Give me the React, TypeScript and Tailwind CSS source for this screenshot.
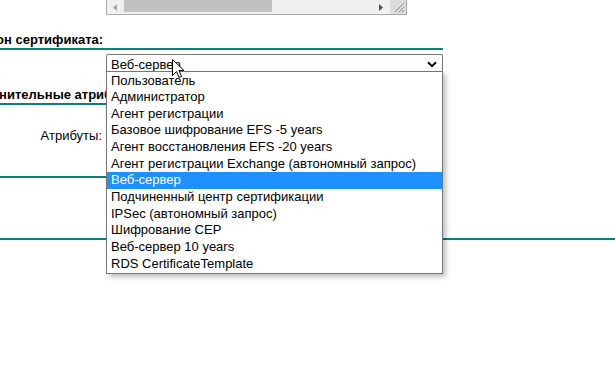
import type { JSX } from "react";

const TEAL = "border-[#0b7f7c]";

const OPTIONS = [
  "Пользователь",
  "Администратор",
  "Агент регистрации",
  "Базовое шифрование EFS -5 years",
  "Агент восстановления EFS -20 years",
  "Агент регистрации Exchange (автономный запрос)",
  "Веб-сервер",
  "Подчиненный центр сертификации",
  "IPSec (автономный запрос)",
  "Шифрование CEP",
  "Веб-сервер 10 years",
  "RDS CertificateTemplate",
];

const SELECTED = "Веб-сервер";

// bottom edge of the textarea above, only its horizontal scrollbar is in view
function TextareaStub(): JSX.Element {
  return (
    <div className="ml-[106px] flex h-[15px] w-[301px] border border-t-0 border-[#a9a9a9] bg-[#f0f0f0]">
      <div className="flex w-[17px] items-center justify-center">
        <svg width="5" height="7" viewBox="0 0 5 7">
          <path d="M4 0 L0 3.5 L4 7 Z" fill="#a3a3a3" />
        </svg>
      </div>
      <div className="mb-[2px] w-[148px] bg-[#c1c1c1]" />
      <div className="flex-1" />
      <div className="flex w-[17px] items-center justify-center">
        <svg width="5" height="7" viewBox="0 0 5 7">
          <path d="M0 0 L4 3.5 L0 7 Z" fill="#505050" />
        </svg>
      </div>
      <div className="relative w-[16px] bg-[#dcdcdc]">
        <svg width="16" height="14" viewBox="0 0 16 14" className="absolute inset-0">
          <path d="M14 3 L5 12 M14 7 L9 12 M14 10 L12 12" stroke="#8a8a8a" strokeWidth="1" />
        </svg>
      </div>
    </div>
  );
}

function Cursor(): JSX.Element {
  return (
    <svg width="13" height="20" viewBox="0 0 13 20" className="absolute left-[172px] top-[59px]">
      <path
        d="M0.5 0.5 L0.5 16.5 L4.5 12.5 L7 18.5 L9.5 17.5 L7 11.5 L12 11.5 Z"
        fill="#ffffff"
        stroke="#000000"
        strokeWidth="1"
        strokeLinejoin="miter"
      />
    </svg>
  );
}

export default function App(): JSX.Element {
  return (
    <div className="relative h-[384px] w-[615px] overflow-hidden bg-white font-['Liberation_Sans',Arial,sans-serif] text-[13px] text-black">
      <TextareaStub />

      <div className={`mt-[17px] w-[443px] border-b-2 ${TEAL} pb-[1px]`}>
        <div className="ml-[-40px] h-[15px] font-bold leading-[15px]">Шаблон сертификата:</div>
      </div>

      <div className="mt-[4px] pl-[106px]">
        <div className="flex h-[19px] w-[337px] items-center justify-between rounded-t-[2px] border border-b-0 border-[#767676] bg-white pl-[4px] pr-[5px]">
          <span className="leading-[17px]">{SELECTED}</span>
          <svg width="10" height="7" viewBox="0 0 10 7">
            <path d="M1 1.2 L5 5.2 L9 1.2" fill="none" stroke="#000" strokeWidth="2" />
          </svg>
        </div>
      </div>

      <div className={`mt-[14px] w-[443px] border-b-2 ${TEAL} pb-[1px]`}>
        <div className="ml-[-42px] h-[15px] font-bold leading-[15px]">Дополнительные атрибуты:</div>
      </div>

      <div className="mt-[22px] flex h-[17px] w-[104px] items-center justify-end pr-[2px]">
        <span>Атрибуты:</span>
      </div>

      <div className={`mt-[32px] w-[443px] border-b-2 ${TEAL}`} />
      <div className={`mt-[60px] w-full border-b-2 ${TEAL}`} />

      {/* open list of the select, drawn over the page */}
      <div className="absolute left-[106px] top-[71px] w-[337px] border border-[#767676] bg-white py-[0.5px] shadow-[3px_3px_5px_rgba(0,0,0,0.25)]">
        {OPTIONS.map((o) => (
          <div
            key={o}
            className={
              o === SELECTED
                ? "h-[16.67px] whitespace-nowrap bg-[#1e90ff] pl-[4px] leading-[16.67px] text-white"
                : "h-[16.67px] whitespace-nowrap pl-[4px] leading-[16.67px]"
            }
          >
            {o}
          </div>
        ))}
      </div>

      <Cursor />
    </div>
  );
}
